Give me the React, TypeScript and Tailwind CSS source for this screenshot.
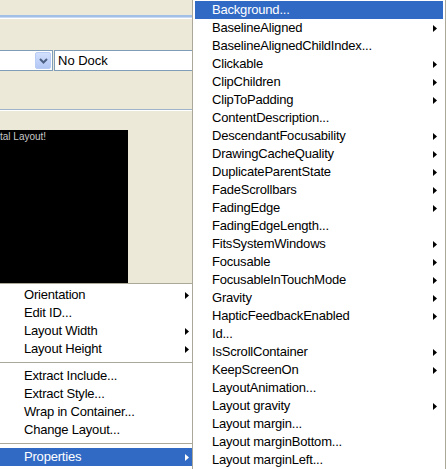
import React from "react";

type Item = { label: string; sub?: boolean; selected?: boolean };

const contextMenu: (Item | "sep")[] = [
  { label: "Orientation", sub: true },
  { label: "Edit ID..." },
  { label: "Layout Width", sub: true },
  { label: "Layout Height", sub: true },
  "sep",
  { label: "Extract Include..." },
  { label: "Extract Style..." },
  { label: "Wrap in Container..." },
  { label: "Change Layout..." },
  "sep",
  { label: "Properties", sub: true, selected: true },
];

const properties: Item[] = [
  { label: "Background...", selected: true },
  { label: "BaselineAligned", sub: true },
  { label: "BaselineAlignedChildIndex..." },
  { label: "Clickable", sub: true },
  { label: "ClipChildren", sub: true },
  { label: "ClipToPadding", sub: true },
  { label: "ContentDescription..." },
  { label: "DescendantFocusability", sub: true },
  { label: "DrawingCacheQuality", sub: true },
  { label: "DuplicateParentState", sub: true },
  { label: "FadeScrollbars", sub: true },
  { label: "FadingEdge", sub: true },
  { label: "FadingEdgeLength..." },
  { label: "FitsSystemWindows", sub: true },
  { label: "Focusable", sub: true },
  { label: "FocusableInTouchMode", sub: true },
  { label: "Gravity", sub: true },
  { label: "HapticFeedbackEnabled", sub: true },
  { label: "Id..." },
  { label: "IsScrollContainer", sub: true },
  { label: "KeepScreenOn", sub: true },
  { label: "LayoutAnimation..." },
  { label: "Layout gravity", sub: true },
  { label: "Layout margin..." },
  { label: "Layout marginBottom..." },
  { label: "Layout marginLeft..." },
];

function Arrow({ light }: { light?: boolean }) {
  return (
    <svg width="4" height="7" viewBox="0 0 4 7" className="shrink-0">
      <path d="M0 0 L4 3.5 L0 7 Z" fill={light ? "#ffffff" : "#000000"} />
    </svg>
  );
}

function MenuRow({ item, indent, arrowPad }: { item: Item; indent: string; arrowPad: string }) {
  return (
    <div
      className={`flex h-[18px] items-center ${indent} ${arrowPad} ${
        item.selected ? "bg-[#316ac5] text-white" : "text-black"
      }`}
    >
      <span className="flex-1 whitespace-nowrap">{item.label}</span>
      {item.sub ? <Arrow light={item.selected} /> : null}
    </div>
  );
}

export default function App() {
  return (
    <div
      className="flex h-[469px] w-[446px] overflow-hidden bg-[#ece9d8] text-[13px] tracking-[-0.2px]"
      style={{ fontFamily: '"Liberation Sans", Arial, sans-serif' }}
    >
      {/* editor area + context menu */}
      <div className="flex w-[192px] shrink-0 flex-col">
        <div className="h-[15px]" />
        <div className="h-[2px] bg-[#a3bfe8]" />
        <div className="h-px bg-[#c9daf3]" />
        <div className="h-px bg-white" />
        <div className="h-[31px]" />
        <div className="flex h-[21px] items-stretch">
          <div className="flex w-[53px] items-center justify-end border-y border-r border-[#7f9db9] bg-white pr-px">
            <div className="flex h-[17px] w-[16px] items-center justify-center rounded-[2px] border border-[#b9ccf5] bg-gradient-to-b from-[#d3e0fd] to-[#b2c7f5]">
              <svg width="9" height="6" viewBox="0 0 9 6">
                <path d="M1 1 L4.5 4.5 L8 1" stroke="#4d6185" strokeWidth="2" fill="none" />
              </svg>
            </div>
          </div>
          <div className="w-px" />
          <div className="flex flex-1 items-center border-y border-l border-[#7f9db9] bg-white pl-[3px] text-[13px] tracking-[0px]">
            No Dock
          </div>
        </div>
        <div className="h-[38px]" />
        <div className="h-px bg-[#9fb3c9]" />
        <div className="h-px bg-white" />
        <div className="h-[19px]" />
        <div className="h-[153px] w-[128px] bg-black">
          <div className="pt-px text-[10px] leading-[12px] tracking-[0px] text-[#c8c8c8]">tal Layout!</div>
        </div>
        <div className="flex-1 border-t border-[#aca899] bg-white pt-[2px]">
          {contextMenu.map((item, i) =>
            item === "sep" ? (
              <div key={i} className="flex h-[9px] items-center">
                <div className="h-px w-full bg-[#aca899]" />
              </div>
            ) : (
              <MenuRow key={i} item={item} indent="pl-[24px]" arrowPad="pr-[3px]" />
            )
          )}
        </div>
      </div>
      {/* Properties submenu */}
      <div className="w-[254px] shrink-0 border-x border-[#aca899] bg-white px-[2px] pt-px">
        {properties.map((item, i) => (
          <MenuRow key={i} item={item} indent="pl-[17px]" arrowPad="pr-[6px]" />
        ))}
      </div>
    </div>
  );
}
